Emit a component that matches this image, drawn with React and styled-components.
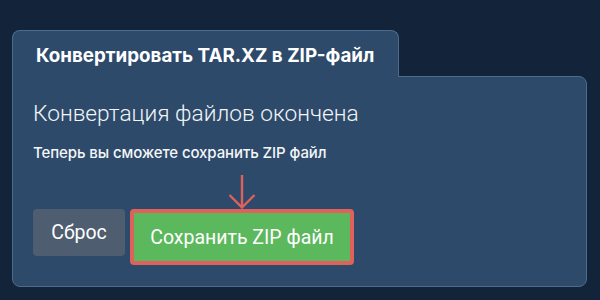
import React from "react";
import styled, { createGlobalStyle } from "styled-components";

const Global = createGlobalStyle`
  html, body { margin: 0; padding: 0; background: #12233a; }
  body { font-family: Inter, "Noto Sans", sans-serif; color: #fff; }
`;

const Page = styled.div`
  width: 600px;
  height: 300px;
  box-sizing: border-box;
  padding: 30px 13px 0 12px;
  background: #12233a;
`;

const Tab = styled.div`
  box-sizing: border-box;
  width: 387px;
  height: 47px;
  margin-bottom: -1px;
  position: relative;
  z-index: 1;
  background: #2d4a6a;
  border: 1px solid #4d6b8c;
  border-bottom: none;
  border-radius: 8px 8px 0 0;
  display: flex;
  align-items: center;
  padding-left: 23px;
  padding-top: 2px;
  font-family: Inter, sans-serif;
  font-weight: 700;
  font-size: 18.8px;
  letter-spacing: 0;
  color: #ffffff;
`;

const Panel = styled.div`
  box-sizing: border-box;
  height: 211px;
  background: #2d4a6a;
  border: 1px solid #4d6b8c;
  border-radius: 0 8px 8px 8px;
  padding: 22px 20px 0 20px;
  display: flex;
  flex-direction: column;
`;

const Heading = styled.div`
  font-family: Roboto, sans-serif;
  font-weight: 300;
  font-size: 22.7px;
  line-height: 30px;
  color: #f2f5f8;
`;

const Sub = styled.div`
  margin-top: 15px;
  font-family: Inter, sans-serif;
  font-weight: 500;
  font-size: 15px;
  line-height: 18px;
  letter-spacing: -0.1px;
  color: #f4f6f8;
`;

const Actions = styled.div`
  margin-top: 47px;
  display: flex;
  align-items: flex-start;
  gap: 5px;
`;

const ResetButton = styled.button`
  box-sizing: border-box;
  width: 92px;
  height: 47px;
  border: none;
  border-radius: 4px;
  background: #4e5e70;
  color: #fff;
  font-family: Roboto, sans-serif;
  font-size: 19.5px;
  padding: 0;
`;

const Highlight = styled.div`
  position: relative;
  border: 4px solid #de625b;
  border-radius: 4px;
  display: flex;
`;

const SaveButton = styled.button`
  box-sizing: border-box;
  width: 216px;
  height: 48px;
  border: none;
  background: #5cb85c;
  color: #fff;
  font-family: Roboto, sans-serif;
  font-size: 19.5px;
  padding: 0;
`;

const Arrow = styled.svg`
  position: absolute;
  left: 50%;
  bottom: calc(100% + 4px);
  transform: translateX(-50%);
`;

export default function App() {
  return (
    <Page>
      <Global />
      <Tab>Конвертировать TAR.XZ в ZIP-файл</Tab>
      <Panel>
        <Heading>Конвертация файлов окончена</Heading>
        <Sub>Теперь вы сможете сохранить ZIP файл</Sub>
        <Actions>
          <ResetButton>Сброс</ResetButton>
          <Highlight>
            <Arrow width="28" height="34" viewBox="0 0 28 34">
              <path d="M14 0 V32.5 M1.5 20 L14 32.5 L26.5 20" fill="none" stroke="#de625b" strokeWidth="2.4" />
            </Arrow>
            <SaveButton>Сохранить ZIP файл</SaveButton>
          </Highlight>
        </Actions>
      </Panel>
    </Page>
  );
}
